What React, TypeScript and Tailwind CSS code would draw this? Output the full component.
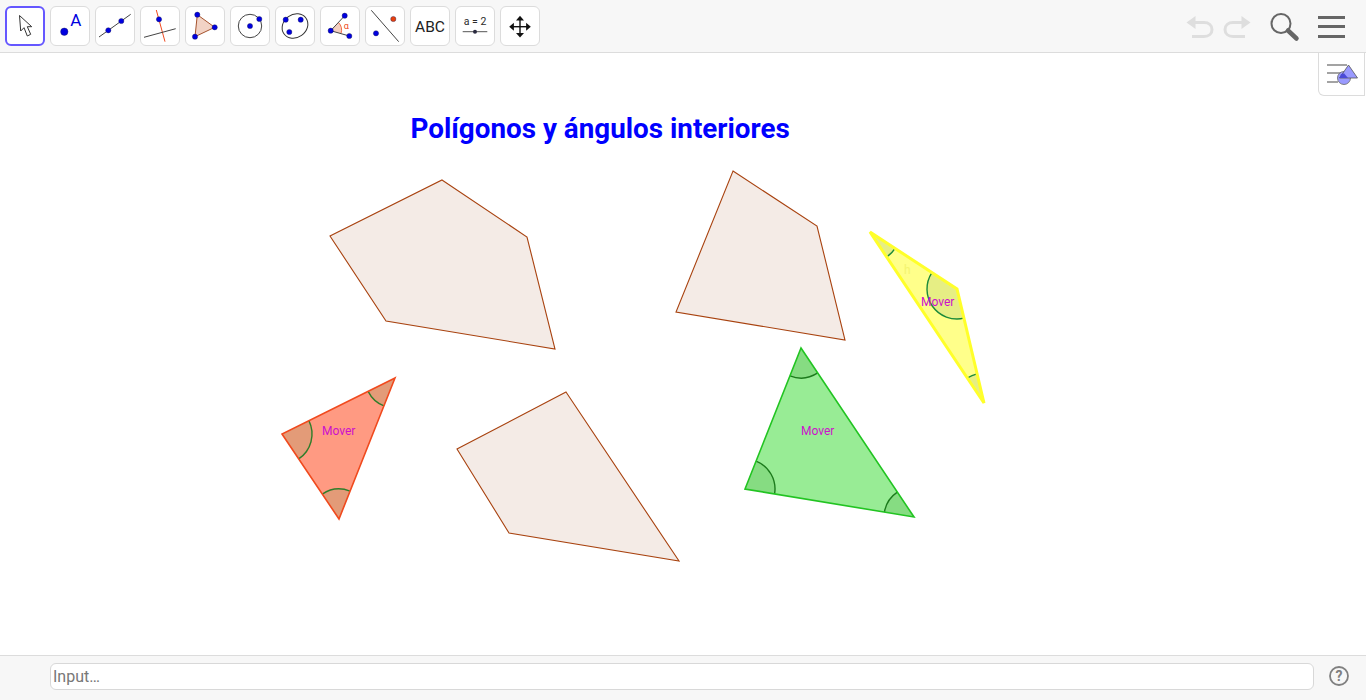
import React from "react";

type Pt = [number, number];

const BLUE = "#0000e0";

// Angle wedge at vertex v between the edges towards p and q
const wedgePaths = (v: Pt, p: Pt, q: Pt, r: number) => {
  const unit = (t: Pt): Pt => {
    const dx = t[0] - v[0];
    const dy = t[1] - v[1];
    const len = Math.hypot(dx, dy);
    return [dx / len, dy / len];
  };
  const u = unit(p);
  const w = unit(q);
  const a: Pt = [v[0] + u[0] * r, v[1] + u[1] * r];
  const b: Pt = [v[0] + w[0] * r, v[1] + w[1] * r];
  const sweep = u[0] * w[1] - u[1] * w[0] > 0 ? 1 : 0;
  const arc = `M${a[0]} ${a[1]}A${r} ${r} 0 0 ${sweep} ${b[0]} ${b[1]}`;
  return { arc, fill: `M${v[0]} ${v[1]}L${a[0]} ${a[1]}A${r} ${r} 0 0 ${sweep} ${b[0]} ${b[1]}Z` };
};

const toPoints = (pts: Pt[]) => pts.map((p) => p.join(",")).join(" ");

const plainPolygons: Pt[][] = [
  [[442, 180], [527, 237], [555, 349], [386, 321], [330, 236]],
  [[733, 171], [817, 226], [845, 340], [676, 312]],
  [[566, 392], [679, 561], [509, 533], [457, 449]],
];

interface TriangleProps {
  pts: Pt[];
  fill: string;
  stroke: string;
  strokeWidth: number;
  wedge: string;
  arc: string;
}

const Triangle: React.FC<TriangleProps> = ({ pts, fill, stroke, strokeWidth, wedge, arc }) => (
  <g>
    <polygon points={toPoints(pts)} fill={fill} />
    {pts.map((v, i) => {
      const w = wedgePaths(v, pts[(i + 1) % 3], pts[(i + 2) % 3], 30);
      return (
        <g key={i}>
          <path d={w.fill} fill={wedge} />
          <path d={w.arc} fill="none" stroke={arc} strokeWidth={1.4} />
        </g>
      );
    })}
    <polygon points={toPoints(pts)} fill="none" stroke={stroke} strokeWidth={strokeWidth} />
  </g>
);

const Dot: React.FC<{ x: number; y: number; r?: number; fill?: string }> = ({ x, y, r = 2.6, fill = BLUE }) => (
  <circle cx={x} cy={y} r={r} fill={fill} stroke="#1a1a50" strokeWidth={0.4} />
);

const ToolButton: React.FC<{ active?: boolean; children: React.ReactNode }> = ({ active, children }) => (
  <div
    className={
      active
        ? "w-10 h-10 rounded-md bg-white border-2 border-[#6557ff] box-border"
        : "w-10 h-10 rounded-md bg-white border border-[#dcdcdc] box-border"
    }
  >
    <svg
      width="40"
      height="40"
      viewBox="0 0 40 40"
      className={active ? "-m-[2px]" : "-m-px"}
      style={{ fontFamily: "Roboto, sans-serif" }}
    >
      {children}
    </svg>
  </div>
);

const tools: React.ReactNode[] = [
  <polygon
    key="move"
    points="14.5,9.5 15.7,25 19,21.7 22.3,30 25.7,28.3 22.3,20.7 26.7,20.7"
    fill="#fff"
    stroke="#333"
    strokeWidth="1"
    strokeLinejoin="round"
  />,
  <g key="point">
    <Dot x={14.3} y={25.7} r={3.7} />
    <text x={25.7} y={19.8} textAnchor="middle" fontSize="17" fill={BLUE}>A</text>
  </g>,
  <g key="line">
    <line x1="4" y1="31" x2="35.7" y2="8.3" stroke="#444" strokeWidth="1" />
    <Dot x={13.3} y={24.3} />
    <Dot x={26.3} y={15} />
  </g>,
  <g key="perp">
    <line x1="16.3" y1="4" x2="25" y2="35.7" stroke="#f04a20" strokeWidth="1" />
    <line x1="4" y1="31.3" x2="35.7" y2="22.7" stroke="#444" strokeWidth="1" />
    <Dot x={19} y={13.3} />
  </g>,
  <g key="polygon">
    <polygon points="12.3,8.7 29.7,21.3 10,30.7" fill="#f2d3c5" stroke="#a5532e" strokeWidth="1" />
    <Dot x={12.3} y={8.7} />
    <Dot x={29.7} y={21.3} />
    <Dot x={10} y={30.7} />
  </g>,
  <g key="circle">
    <circle cx="20" cy="20" r="11.7" fill="none" stroke="#444" strokeWidth="1" />
    <Dot x={20} y={20} />
    <Dot x={29.3} y={13} />
  </g>,
  <g key="ellipse">
    <ellipse cx="20" cy="20" rx="13.5" ry="11.5" transform="rotate(-35 20 20)" fill="none" stroke="#333" strokeWidth="1" />
    <Dot x={10.7} y={13.7} />
    <Dot x={25.7} y={13.7} />
    <Dot x={14.3} y={26} />
  </g>,
  <g key="angle">
    <path d="M10.7 24.7L18.5 16.5A11 11 0 0 1 21 27.5Z" fill="#f4cfc0" />
    <path d="M18.5 16.5A11 11 0 0 1 21 27.5" fill="none" stroke="#f04a20" strokeWidth="0.8" />
    <line x1="10.7" y1="24.7" x2="24.7" y2="9.7" stroke="#444" strokeWidth="1" />
    <line x1="10.7" y1="24.7" x2="29.3" y2="30" stroke="#444" strokeWidth="1" />
    <text x={26.3} y={23} textAnchor="middle" fontSize="9" fill="#f04a20">α</text>
    <Dot x={10.7} y={24.7} />
    <Dot x={24.7} y={9.7} />
    <Dot x={29.3} y={30} />
  </g>,
  <g key="reflect">
    <line x1="6.3" y1="4.3" x2="33.7" y2="35.7" stroke="#444" strokeWidth="1" />
    <Dot x={28.3} y={13} fill="#e8400c" />
    <Dot x={11} y={27.3} />
  </g>,
  <text key="abc" x={20} y={25.8} textAnchor="middle" fontSize="15.5" fill="#222">ABC</text>,
  <g key="slider">
    <text x={20} y={18.5} textAnchor="middle" fontSize="10.5" fill="#2a2a2a">a = 2</text>
    <line x1="7.7" y1="25.7" x2="32.3" y2="25.7" stroke="#555" strokeWidth="1" />
    <circle cx="20" cy="25.7" r="2" fill="#2a2a40" />
  </g>,
  <g key="pan" fill="#111">
    <rect x="19.3" y="12" width="1.4" height="17" />
    <rect x="11.5" y="20" width="17" height="1.4" />
    <polygon points="20,9.8 24,14.5 16,14.5" />
    <polygon points="20,31.6 24,26.9 16,26.9" />
    <polygon points="9.2,20.7 13.9,16.7 13.9,24.7" />
    <polygon points="30.8,20.7 26.1,16.7 26.1,24.7" />
  </g>,
];

const App: React.FC = () => {
  return (
    <div className="w-[1366px] h-[700px] flex flex-col overflow-hidden bg-white font-['Roboto',sans-serif]">
      {/* Toolbar */}
      <div className="h-[53px] shrink-0 flex items-start justify-between bg-[#f7f7f7] border-b border-[#dcdcdc] pl-[5px] pt-1.5 pr-[21px]">
        <div className="flex gap-[5px]">
          {tools.map((tool, i) => (
            <ToolButton key={i} active={i === 0}>
              {tool}
            </ToolButton>
          ))}
        </div>
        <div className="flex items-start">
          <svg width="30" height="26" viewBox="0 0 30 26" className="mt-[9px] mr-[7px]" fill="none" stroke="#dedede" strokeWidth="3">
            <path d="M5 7.5H19C24 7.5 27 10.5 27 14.5C27 18.5 24 21.5 19 21.5H7" />
            <path d="M10.5 1L1.5 7.5L10.5 14Z" fill="#dedede" stroke="none" />
          </svg>
          <svg width="30" height="26" viewBox="0 0 30 26" className="mt-[9px] mr-[17px]" fill="none" stroke="#dedede" strokeWidth="3">
            <path d="M25 7.5H11C6 7.5 3 10.5 3 14.5C3 18.5 6 21.5 11 21.5H23" />
            <path d="M19.5 1L28.5 7.5L19.5 14Z" fill="#dedede" stroke="none" />
          </svg>
          <svg width="32" height="32" viewBox="0 0 32 32" className="mt-[5px] mr-[17px]" fill="none" stroke="#666">
            <circle cx="12" cy="12.5" r="9.5" strokeWidth="2" />
            <line x1="19" y1="19.5" x2="27.5" y2="27.5" strokeWidth="4.5" strokeLinecap="round" />
          </svg>
          <div className="w-[27px] mt-[9.5px] flex flex-col gap-[6.5px]">
            <div className="h-[3px] bg-[#666]" />
            <div className="h-[3px] bg-[#666]" />
            <div className="h-[3px] bg-[#666]" />
          </div>
        </div>
      </div>

      {/* Graphics view */}
      <div className="relative flex-1 min-h-0">
        <svg width="1366" height="602" viewBox="0 53 1366 602" className="block">
          <text x={410.5} y={138} fontSize="27.8" fontWeight="700" fill="#0000ff" style={{ fontFamily: "Roboto, sans-serif" }}>
            Polígonos y ángulos interiores
          </text>
          {plainPolygons.map((pts, i) => (
            <polygon key={i} points={toPoints(pts)} fill="#f4ebe6" stroke="#a8420f" strokeWidth="1.1" />
          ))}
          <Triangle
            pts={[[395, 378], [282, 434], [339, 519]]}
            fill="#ff9a82"
            stroke="#f04a1e"
            strokeWidth={1.6}
            wedge="#e39b78"
            arc="#2f7d2a"
          />
          <Triangle
            pts={[[801, 348], [745, 489], [914, 517]]}
            fill="#98ec95"
            stroke="#22c422"
            strokeWidth={1.6}
            wedge="#86dc82"
            arc="#1c7a1c"
          />
          <Triangle
            pts={[[870, 232], [957, 289], [984, 403]]}
            fill="#ffff8a"
            stroke="#ffff2a"
            strokeWidth={3}
            wedge="#e6ee84"
            arc="#1c8a3a"
          />
          <g fontSize="12" fill="#cc11cc" style={{ fontFamily: "Roboto, sans-serif" }}>
            <text x={322} y={435}>Mover</text>
            <text x={801} y={435}>Mover</text>
            <text x={921} y={306}>Mover</text>
          </g>
          <text x={904} y={274} fontSize="12" fill="#f4f470" style={{ fontFamily: "Roboto, sans-serif" }}>h</text>
        </svg>

        {/* Algebra view toggle */}
        <div className="absolute top-0 right-px w-[47px] h-[43px] bg-white border-l border-r border-b border-[#dcdcdc] rounded-bl-md">
          <svg width="45" height="42" viewBox="0 0 45 42">
            <g fill="#a3a3a3">
              <rect x="8" y="11" width="20" height="2" />
              <rect x="8" y="19" width="14" height="2" />
              <rect x="8" y="28" width="11" height="2" />
            </g>
            <circle cx="25" cy="25" r="6.5" fill="#9a9aff" stroke="#666" strokeWidth="0.8" />
            <polygon points="29.5,12 38.5,25 20.5,25" fill="#9a9aff" stroke="#555" strokeWidth="0.8" />
            <path d="M25 20.2L29 25L20.5 25L22 21.3Z" fill="#4a4ad8" />
          </svg>
        </div>
      </div>

      {/* Input bar */}
      <div className="h-[45px] shrink-0 flex items-center bg-[#f7f7f7] border-t border-[#dcdcdc] pl-[50px] pr-[16px] gap-[14px] pb-[4px]">
        <input
          placeholder="Input…"
          className="flex-1 min-w-0 h-[27px] px-[2px] bg-white border border-[#d8d8d8] rounded-md text-base text-[#333] outline-none placeholder:text-[#777]"
        />
        <svg width="22" height="22" viewBox="0 0 22 22" className="shrink-0">
          <circle cx="11" cy="11" r="9" fill="none" stroke="#808080" strokeWidth="1.8" />
          <text x={11} y={16} textAnchor="middle" fontSize="14" fontWeight="700" fill="#808080" style={{ fontFamily: "Roboto, sans-serif" }}>?</text>
        </svg>
      </div>
    </div>
  );
};

export default App;
